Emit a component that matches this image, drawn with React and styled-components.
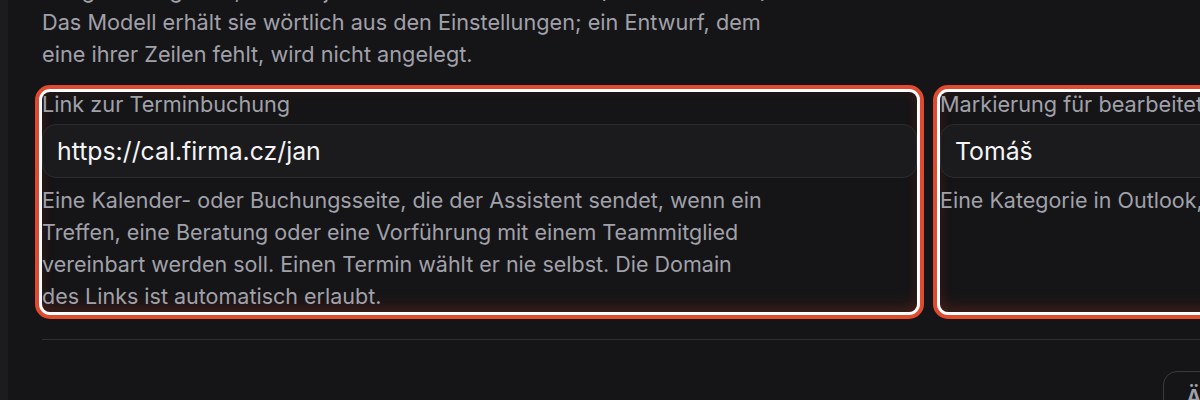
import React from 'react';
import styled, { createGlobalStyle } from 'styled-components';

const GlobalStyle = createGlobalStyle`
  html, body {
    margin: 0;
    padding: 0;
    width: 1200px;
    height: 400px;
    overflow: hidden;
    background: #151517;
  }
  body {
    font-family: Inter, "Noto Sans", sans-serif;
    -webkit-font-smoothing: antialiased;
  }
`;

const Page = styled.div`
  display: flow-root;
  border-left: 8px solid #1c1c1f;
  padding-left: 34px;
  height: 400px;
  box-sizing: border-box;
`;

const Intro = styled.p`
  margin: -26px 0 0;
  max-width: 764px;
  font-size: 21.7px;
  line-height: 32px;
  color: #a1a1aa;
`;

const FieldGrid = styled.div`
  display: grid;
  grid-template-columns: 875px 875px;
  gap: 23px;
  margin-top: 22px;
`;

const Field = styled.div`
  display: flex;
  flex-direction: column;
  border-radius: 8px;
  background: #151517;
  box-shadow:
    inset 0 -10px 18px -6px rgba(200, 60, 35, 0.22),
    inset 0 0 14px rgba(200, 60, 35, 0.12),
    0 0 0 3px #ffffff,
    0 0 0 7px #e04a2f;
`;

const Label = styled.label`
  font-size: 21.7px;
  line-height: 24px;
  color: #a1a1aa;
  white-space: nowrap;
`;

const Input = styled.input`
  margin-top: 8px;
  height: 54px;
  box-sizing: border-box;
  padding: 0 14px;
  border-radius: 14px;
  border: 1px solid #2c2c30;
  background: #1b1b1e;
  color: #f4f4f5;
  font-family: inherit;
  font-size: 24.8px;
  outline: none;
`;

const Help = styled.p`
  margin: 6px 0 0;
  max-width: 728px;
  font-size: 21.5px;
  line-height: 32px;
  color: #a1a1aa;
`;

const Divider = styled.hr`
  margin: 27px 0 0;
  border: none;
  border-top: 1px solid #2e2e32;
`;

const Footer = styled.div`
  display: flex;
  padding-left: 1121px;
  margin-top: 31px;
`;

const Button = styled.button`
  height: 52px;
  padding: 0 22px;
  border: 1px solid #3a3a3f;
  border-radius: 14px;
  background: transparent;
  color: #a1a1aa;
  font-family: inherit;
  font-size: 21.7px;
  font-weight: 600;
  white-space: nowrap;
`;

const App = () => (
  <>
    <GlobalStyle />
    <Page>
      <Intro>
        Die ganze Signatur, wie sie jede Antwort beenden soll (mehrere Zeilen).
        Das Modell erhält sie wörtlich aus den Einstellungen; ein Entwurf, dem
        eine ihrer Zeilen fehlt, wird nicht angelegt.
      </Intro>
      <FieldGrid>
        <Field>
          <Label>Link zur Terminbuchung</Label>
          <Input defaultValue="https://cal.firma.cz/jan" />
          <Help>
            Eine Kalender- oder Buchungsseite, die der Assistent sendet, wenn ein
            Treffen, eine Beratung oder eine Vorführung mit einem Teammitglied
            vereinbart werden soll. Einen Termin wählt er nie selbst. Die Domain
            des Links ist automatisch erlaubt.
          </Help>
        </Field>
        <Field>
          <Label>Markierung für bearbeitete Entwürfe</Label>
          <Input defaultValue="Tomáš" />
          <Help>Eine Kategorie in Outlook, die bearbeitete Entwürfe kennzeichnet.</Help>
        </Field>
      </FieldGrid>
      <Divider />
      <Footer>
        <Button>Änderungen speichern</Button>
      </Footer>
    </Page>
  </>
);

export default App;
